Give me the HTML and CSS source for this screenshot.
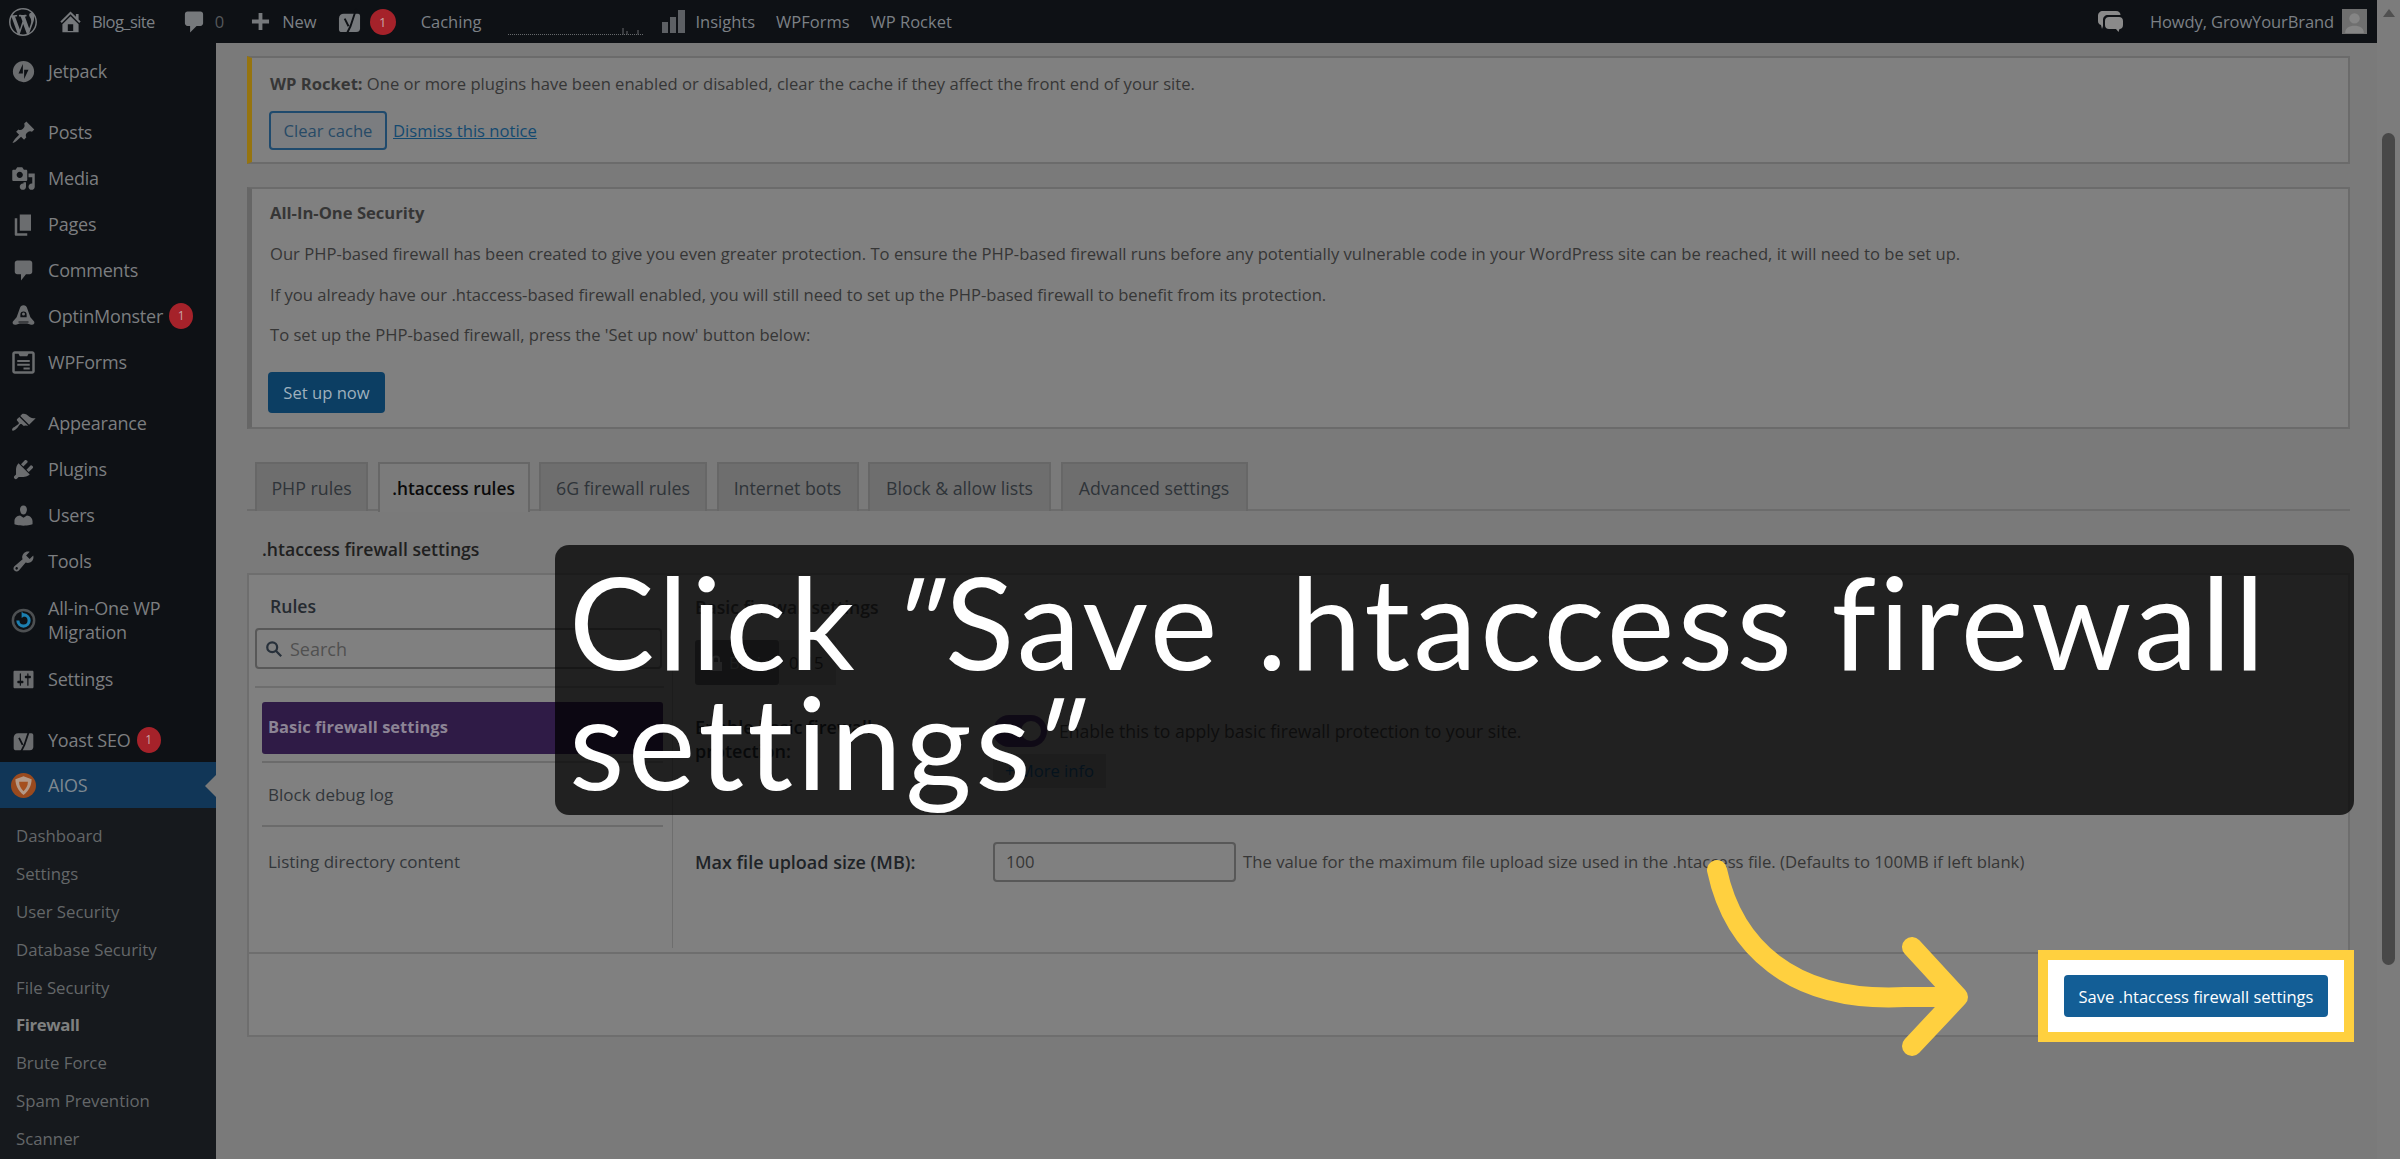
FILE: index.html
```html
<!DOCTYPE html>
<html>
<head>
    <title>Firewall ‹ Blog_site — WordPress</title>
    <link rel="stylesheet" href="styles.css">
</head>
<body>
    <div class="page">
        <div class="topbar">
            <div class="bar-left">
                <svg class="bar-icon logo" viewBox="0 0 20 20"><path d="M20 10c0-5.51-4.49-10-10-10C4.48 0 0 4.49 0 10c0 5.52 4.48 10 10 10 5.51 0 10-4.48 10-10zM7.78 15.37L4.37 6.22c.55-.02 1.17-.08 1.17-.08.5-.06.44-1.13-.06-1.11 0 0-1.45.11-2.37.11-.18 0-.37 0-.58-.01C4.12 2.69 6.87 1.11 10 1.11c2.33 0 4.45.87 6.05 2.34-.68-.11-1.65.39-1.65 1.58 0 .74.45 1.36.9 2.1.35.61.55 1.36.55 2.46 0 1.49-1.4 5-1.4 5l-3.03-8.37c.54-.02.82-.17.82-.17.5-.05.44-1.25-.06-1.22 0 0-1.44.12-2.38.12-.87 0-2.33-.12-2.33-.12-.5-.03-.56 1.2-.06 1.22l.92.08 1.26 3.41zM17.41 10c.24-.64.74-1.87.43-4.25.7 1.29 1.05 2.71 1.05 4.25 0 3.29-1.73 6.24-4.4 7.78.97-2.59 1.94-5.2 2.92-7.78zM6.1 18.09C3.12 16.65 1.11 13.53 1.11 10c0-1.3.23-2.48.72-3.59C3.25 10.3 4.67 14.2 6.1 18.09zm4.03-6.63l2.58 6.98c-.86.29-1.76.45-2.71.45-.79 0-1.57-.11-2.29-.33.81-2.38 1.62-4.74 2.42-7.1z"/></svg>
                <svg class="bar-icon home" viewBox="0 0 20 20"><path d="M16 8.5l1.53 1.53-1.06 1.06L10 4.62l-6.47 6.47-1.06-1.06L10 2.5l4 4v-2h2v4zm-6-2.46l6 5.99V18H4v-5.97zM12 17v-5H8v5h4z"/></svg>
                <span class="bar-text site-name">Blog_site</span>
                <svg class="bar-icon bubble" viewBox="0 0 20 20"><path d="M5 2h10c1.1 0 2 .9 2 2v7c0 1.1-.9 2-2 2h-3l-5 5v-5H5c-1.1 0-2-.9-2-2V4c0-1.1.9-2 2-2z"/></svg>
                <span class="bar-text count">0</span>
                <svg class="bar-icon plus" viewBox="0 0 20 20"><path d="M8 1h4v7h7v4h-7v7H8v-7H1V8h7z"/></svg>
                <span class="bar-text new">New</span>
                <svg class="bar-icon yoast" viewBox="0 0 24 28"><path d="M6 6h15c1 0 2 1 2 2v13c0 2-1 4-4 4H4c-2 0-3-1-3-3V11c0-3 2-5 5-5z"/><path class="yoast-y" d="M7 11l4 8M19 1l-6 18-4 8"/></svg>
                <span class="badge bar-badge">1</span>
                <span class="bar-text caching">Caching</span>
                <svg class="spark" viewBox="0 0 135 14"><path d="M0 12.5h135" stroke-dasharray="1 1"/><path d="M115 12.5V6M119 12.5V9M130 12.5V8"/></svg>
                <svg class="bar-icon bars" viewBox="0 0 23 24"><rect x="0" y="12" width="6" height="11"/><rect x="8" y="7" width="6" height="16"/><rect x="16" y="0" width="7" height="23"/></svg>
                <span class="bar-text insights">Insights</span>
                <span class="bar-text wpforms">WPForms</span>
                <span class="bar-text rocket">WP Rocket</span>
            </div>
            <div class="bar-right">
                <svg class="bar-icon chat" viewBox="0 0 25 22"><path d="M5 0h13c3 0 4.5 2 4.5 4H10C7 4 5 6 5 9v6l-1 3-1-4C1 13.5 0 12 0 10V5c0-3 2-5 5-5z"/><path d="M11 6h10c2.5 0 4 1.5 4 4v4c0 2.5-1.5 4-3.5 4l-1 3-2.500-3h-7c-2.500 0-4-1.500-4-4v-4c0-2.500 1.500-4 4-4z"/></svg>
                <span class="bar-text howdy">Howdy, GrowYourBrand</span>
                <div class="avatar"><svg viewBox="0 0 24 24"><circle cx="12" cy="9" r="5"/><path d="M3 23c0-5 4-7 9-7s9 2 9 7z"/></svg></div>
            </div>
        </div>

        <div class="layout">
            <div class="sidebar">
                <div class="menu-group">
                    <div class="menu-item">
                        <svg class="menu-icon" viewBox="0 0 20 20"><path fill-rule="evenodd" d="M10 1.5a8.5 8.5 0 1 1 0 17 8.5 8.5 0 0 1 0-17zM9.500 4L6 11.500h3.500zm1 12l3.500-7.500h-3.500z"/></svg>
                        <span>Jetpack</span>
                    </div>
                </div>
                <div class="menu-group">
                    <div class="menu-item">
                        <svg class="menu-icon" viewBox="0 0 20 20"><path d="M10.44 3.02l1.82-1.82 6.36 6.35-1.83 1.82c-1.05-.68-2.48-.57-3.41.36l-.75.75c-.92.93-1.04 2.35-.35 3.41l-1.83 1.82-2.41-2.41-2.8 2.79c-.42.42-3.38 2.71-3.8 2.29s1.86-3.39 2.28-3.81l2.79-2.79L4.1 9.36l1.83-1.82c1.05.69 2.48.57 3.4-.36l.75-.75c.93-.92 1.05-2.35.36-3.41z"/></svg>
                        <span>Posts</span>
                    </div>
                    <div class="menu-item">
                        <svg class="menu-icon" viewBox="0 0 20 20"><path d="M13 11V4c0-.55-.45-1-1-1h-1.67L9 1H5L3.67 3H2c-.55 0-1 .45-1 1v7c0 .55.45 1 1 1h10c.55 0 1-.45 1-1zM7 4.5c1.38 0 2.5 1.12 2.5 2.5S8.38 9.5 7 9.5 4.5 8.38 4.5 7 5.62 4.5 7 4.5zM14 6h5v10.5c0 1.38-1.12 2.5-2.5 2.5S14 17.88 14 16.5s1.12-2.5 2.5-2.5c.17 0 .34.02.5.05V9h-3V6zm-4 8.05V13h2v3.5c0 1.38-1.12 2.5-2.5 2.5S7 17.88 7 16.5 8.12 14 9.5 14c.17 0 .34.02.5.05z"/></svg>
                        <span>Media</span>
                    </div>
                    <div class="menu-item">
                        <svg class="menu-icon" viewBox="0 0 20 20"><path d="M7 2h9v13H7zM5 5v12h8v2H4c-.6 0-1-.4-1-1V5z"/></svg>
                        <span>Pages</span>
                    </div>
                    <div class="menu-item">
                        <svg class="menu-icon" viewBox="0 0 20 20"><path d="M5 2h10c1.1 0 2 .9 2 2v7c0 1.1-.9 2-2 2h-3l-4 5v-5H5c-1.1 0-2-.9-2-2V4c0-1.1.9-2 2-2z"/></svg>
                        <span>Comments</span>
                    </div>
                    <div class="menu-item">
                        <svg class="menu-icon" viewBox="0 0 20 20"><path d="M10 1c1.5 0 2.5 1 3 2.5l2.5 7 3 3.5c.8 1.500-.5 3-2.500 2.500l-3-1h-6l-3 1c-2 .5-3.300-1-2.500-2.500l3-3.500 2.500-7C7.500 2 8.500 1 10 1z"/><path class="icon-cut" d="M7.500 8.500a2.500 2.500 0 0 1 5 0v2h-5zM6 14h8v.8H6z"/><circle cx="10" cy="8" r="1.200"/></svg>
                        <span>OptinMonster</span>
                        <span class="badge">1</span>
                    </div>
                    <div class="menu-item">
                        <svg class="menu-icon" viewBox="0 0 20 20"><path fill-rule="evenodd" d="M3 1h14c1 0 2 1 2 2v14c0 1-1 2-2 2H3c-1 0-2-1-2-2V3c0-1 1-2 2-2zm0 2v14h14V3h-3l-1 2H7L6 3zm2 5h10v1.5H5zm0 3h10v1.5H5zm5 3h5v1.5h-5z"/></svg>
                        <span>WPForms</span>
                    </div>
                </div>
                <div class="menu-group">
                    <div class="menu-item">
                        <svg class="menu-icon" viewBox="0 0 20 20"><path d="M14.48 11.06L7.41 3.99l1.5-1.5c.5-.56 2.3-.47 3.51.32 1.21.8 1.43 1.28 2.91 2.1 1.18.64 2.45 1.26 4.45.85zm-.71.71L6.7 4.7 4.93 6.47c-.39.39-.39 1.02 0 1.41l1.06 1.06c.39.39.39 1.03 0 1.42-.6.6-1.43 1.11-2.21 1.69-.35.26-.7.53-1.01.84C1.43 13.23.4 14.89 1.06 15.55c.65.65 2.32-.38 3.66-1.71.31-.31.58-.66.84-1.01.58-.78 1.09-1.61 1.69-2.21.39-.39 1.03-.39 1.42 0l1.06 1.06c.39.39 1.02.39 1.41 0z"/></svg>
                        <span>Appearance</span>
                    </div>
                    <div class="menu-item">
                        <svg class="menu-icon" viewBox="0 0 20 20"><path d="M13.11 4.36L9.87 7.6 8 5.73l3.24-3.24c.35-.34 1.05-.2 1.56.32.52.51.66 1.21.31 1.55zm-8 1.77l.91-1.12 9.01 9.01-1.19.84c-.71.71-2.63 1.16-3.82 1.16H6.14L4.9 17.26c-.59.59-1.54.59-2.12 0-.59-.58-.59-1.53 0-2.12l1.24-1.24v-3.88c0-1.13.4-3.19 1.09-3.89zm7.26 3.97l3.24-3.24c.34-.35 1.04-.21 1.55.31.52.51.66 1.21.31 1.55l-3.24 3.25z"/></svg>
                        <span>Plugins</span>
                    </div>
                    <div class="menu-item">
                        <svg class="menu-icon" viewBox="0 0 20 20"><path d="M10 9.25c-2.27 0-2.73-3.44-2.73-3.44C7 4.02 7.82 2 9.97 2c2.16 0 2.98 2.02 2.71 3.81 0 0-.41 3.44-2.68 3.44zm0 2.57L12.72 10c2.39 0 4.52 2.33 4.52 4.53v2.49s-3.65 1.13-7.24 1.13c-3.65 0-7.24-1.13-7.24-1.13v-2.49c0-2.25 1.94-4.48 4.47-4.48z"/></svg>
                        <span>Users</span>
                    </div>
                    <div class="menu-item">
                        <svg class="menu-icon" viewBox="0 0 20 20"><path d="M16.68 9.77c-1.34 1.34-3.3 1.67-4.95.99l-5.41 6.52c-.99.99-2.59.99-3.58 0s-.99-2.59 0-3.57l6.52-5.42c-.68-1.65-.35-3.61.99-4.95 1.28-1.28 3.12-1.62 4.72-1.06l-2.89 2.89 2.82 2.82 2.86-2.87c.53 1.58.18 3.39-1.08 4.65zM3.81 16.21c.4.39 1.04.39 1.43 0 .4-.4.4-1.04 0-1.43-.39-.4-1.03-.4-1.43 0-.39.39-.39 1.03 0 1.43z"/></svg>
                        <span>Tools</span>
                    </div>
                    <div class="menu-item two-line">
                        <svg class="menu-icon" viewBox="0 0 20 20"><circle class="ring" cx="10" cy="10" r="8.5"/><path class="ring-blue" d="M10 5.5a4.5 4.5 0 1 1-4.500 4.500"/><path class="ring-head" d="M8.500 3l3.500 2.500L8.500 8z"/></svg>
                        <span>All-in-One WP<br>Migration</span>
                    </div>
                    <div class="menu-item">
                        <svg class="menu-icon" viewBox="0 0 20 20"><path d="M18 16V4c0-.55-.45-1-1-1H3c-.55 0-1 .45-1 1v12c0 .55.45 1 1 1h14c.55 0 1-.45 1-1zM8 11h1c.55 0 1 .45 1 1s-.45 1-1 1H8v1.5c0 .28-.22.5-.5.5s-.5-.22-.5-.5V13H6c-.55 0-1-.45-1-1s.45-1 1-1h1V5.5c0-.28.22-.5.5-.5s.5.22.5.5V11zm5-2h-1c-.55 0-1-.45-1-1s.45-1 1-1h1V5.5c0-.28.22-.5.5-.5s.5.22.5.5V7h1c.55 0 1 .45 1 1s-.45 1-1 1h-1v5.5c0 .28-.22.5-.5.5s-.5-.22-.5-.5V9z"/></svg>
                        <span>Settings</span>
                    </div>
                </div>
                <div class="menu-group last">
                    <div class="menu-item">
                        <svg class="menu-icon" viewBox="0 0 24 28"><path d="M6 6h15c1 0 2 1 2 2v13c0 2-1 4-4 4H4c-2 0-3-1-3-3V11c0-3 2-5 5-5z"/><path class="yoast-y" d="M7 11l4 8M19 1l-6 18-4 8"/></svg>
                        <span>Yoast SEO</span>
                        <span class="badge">1</span>
                    </div>
                    <div class="menu-item current">
                        <svg class="menu-icon" viewBox="0 0 20 20"><circle class="aios-disc" cx="10" cy="10" r="10"/><path class="aios-shield" d="M3.5 5L10 2.5 16.5 5c0 5-2.5 9.5-6.5 12.5C6 14.500 3.500 10 3.500 5z"/><path class="aios-heart" d="M6.500 7h7c0 3-1.200 5.200-3.500 7.500C7.700 12.200 6.500 10 6.500 7z"/></svg>
                        <span>AIOS</span>
                    </div>
                    <div class="submenu">
                        <a>Dashboard</a>
                        <a>Settings</a>
                        <a>User Security</a>
                        <a>Database Security</a>
                        <a>File Security</a>
                        <a class="active">Firewall</a>
                        <a>Brute Force</a>
                        <a>Spam Prevention</a>
                        <a>Scanner</a>
                    </div>
                </div>
            </div>

            <div class="content">
                <div class="notice notice-rocket">
                    <p><b>WP Rocket:</b> One or more plugins have been enabled or disabled, clear the cache if they affect the front end of your site.</p>
                    <div class="notice-actions">
                        <span class="btn-outline">Clear cache</span>
                        <a class="dismiss">Dismiss this notice</a>
                    </div>
                </div>

                <div class="notice notice-security">
                    <p class="notice-title"><b>All-In-One Security</b></p>
                    <p>Our PHP-based firewall has been created to give you even greater protection. To ensure the PHP-based firewall runs before any potentially vulnerable code in your WordPress site can be reached, it will need to be set up.</p>
                    <p>If you already have our .htaccess-based firewall enabled, you will still need to set up the PHP-based firewall to benefit from its protection.</p>
                    <p>To set up the PHP-based firewall, press the 'Set up now' button below:</p>
                    <span class="btn-primary setup">Set up now</span>
                </div>

                <div class="tabs">
                    <span class="tab t1">PHP rules</span>
                    <span class="tab t2 active">.htaccess rules</span>
                    <span class="tab t3">6G firewall rules</span>
                    <span class="tab t4">Internet bots</span>
                    <span class="tab t5">Block &amp; allow lists</span>
                    <span class="tab t6">Advanced settings</span>
                </div>

                <h2 class="section-title">.htaccess firewall settings</h2>

                <div class="panel">
                    <div class="panel-body">
                        <div class="rules">
                            <div class="rules-title">Rules</div>
                            <div class="rules-search">
                                <svg viewBox="0 0 20 20"><circle cx="8" cy="8" r="5.5"/><path d="M12 12l6 6"/></svg>
                                <span>Search</span>
                            </div>
                            <div class="rules-list">
                                <div class="rule selected">Basic firewall settings</div>
                                <div class="rule">Block debug log</div>
                                <div class="rule">Listing directory content</div>
                            </div>
                        </div>
                        <div class="rule-detail">
                            <h3>Basic firewall settings</h3>
                            <div class="level">
                                <span class="level-tag">
                                    <svg viewBox="0 0 14 18"><path d="M1 8h12v9H1z"/><path class="shackle" d="M4 8V5c0-3.5 6-3.5 6 0v3"/></svg>
                                    Basic
                                </span>
                                <span class="level-score">0/15</span>
                            </div>
                            <div class="field enable">
                                <label>Enable basic firewall<br>protection:</label>
                                <div>
                                    <div class="toggle-row">
                                        <span class="toggle"><span class="knob"></span></span>
                                        <span>Enable this to apply basic firewall protection to your site.</span>
                                    </div>
                                    <span class="more-info">+ More info</span>
                                </div>
                            </div>
                            <div class="field upload">
                                <label>Max file upload size (MB):</label>
                                <span class="text-input">100</span>
                                <span class="field-note">The value for the maximum file upload size used in the .htaccess file. (Defaults to 100MB if left blank)</span>
                            </div>
                        </div>
                    </div>
                    <div class="panel-footer"></div>
                </div>
            </div>
        </div>
    </div>

    <div class="scrollbar">
        <span class="scroll-up"></span>
        <span class="scroll-thumb"></span>
    </div>

    <div class="caption">Click <i>"</i>Save .htaccess firewall settings<i>"</i></div>
    <svg class="arrow" viewBox="0 0 2400 1159">
        <path d="M1717 870C1733 945 1790 1003 1905 997L1958 997M1912 947L1958 997L1912 1046"/>
    </svg>
    <div class="highlight"><span class="btn-primary save">Save .htaccess firewall settings</span></div>
</body>
</html>
```

FILE: styles.css
```css
* {
    box-sizing: border-box;
}

html, body {
    margin: 0;
    padding: 0;
    height: 1159px;
    overflow: hidden;
}

body {
    display: flex;
    background-color: #7a7a7a;
    color: #363636;
    font-family: 'Open Sans', 'Noto Sans', sans-serif;
    font-size: 16.6px;
}

.page {
    width: 2377px;
    height: 1159px;
    display: flex;
    flex-direction: column;
}

/* top admin bar */
.topbar {
    height: 43px;
    flex: none;
    background-color: #0e1115;
    display: flex;
    justify-content: space-between;
    align-items: center;
    color: #7c8085;
    font-size: 16.5px;
}

.bar-left, .bar-right {
    display: flex;
    align-items: center;
    height: 43px;
}

.bar-icon {
    fill: #76797c;
    display: block;
    flex: none;
}

.logo { width: 28px; height: 28px; margin-left: 9px; }
.home { width: 27px; height: 27px; margin-left: 20px; }
.site-name { margin-left: 8px; letter-spacing: -0.6px; }
.bubble { width: 26px; height: 26px; margin-left: 26px; }
.count { margin-left: 8px; color: #55585b; }
.plus { width: 19px; height: 19px; margin-left: 27px; }
.new { margin-left: 12px; }
.yoast { width: 23px; height: 27px; margin-left: 21px; }
.yoast-y { fill: none; stroke: #0e1115; stroke-width: 2; }
.bar-badge { margin-left: 9px; width: 27px; height: 27px; }
.caching { margin-left: 25px; }
.spark { width: 135px; height: 14px; margin-left: 27px; margin-top: 14px; fill: none; stroke: #66696c; stroke-width: 1; flex: none; }
.bars { width: 23px; height: 24px; margin-left: 19px; fill: #5d6064; }
.insights { margin-left: 10px; }
.wpforms { margin-left: 21px; }
.rocket { margin-left: 21px; }

.chat { width: 25px; height: 22px; fill: #8a8a8a; }
.howdy { margin-left: 27px; letter-spacing: -0.1px; }

.avatar {
    width: 25px;
    height: 25px;
    margin-left: 8px;
    margin-right: 10px;
    background-color: #6f6f6f;
}

.avatar svg {
    display: block;
    fill: #858585;
}

.badge {
    display: flex;
    align-items: center;
    justify-content: center;
    width: 26px;
    height: 26px;
    flex: none;
    border-radius: 50%;
    background-color: #a5222a;
    color: #c9a5a7;
    font-size: 13px;
}

/* left menu */
.layout {
    flex: 1;
    display: flex;
    min-height: 0;
}

.sidebar {
    width: 216px;
    flex: none;
    background-color: #0e1115;
    padding-top: 5px;
    color: #7c7e80;
    overflow: hidden;
}

.menu-group {
    margin-bottom: 15px;
}

.menu-group.last {
    margin-bottom: 0;
}

.menu-item {
    height: 46px;
    display: flex;
    align-items: center;
    padding-left: 11px;
    font-size: 18px;
    letter-spacing: -0.2px;
    line-height: 24px;
}

.menu-item span {
    white-space: nowrap;
}

.menu-item.two-line {
    height: 72px;
}

.menu-icon {
    width: 25px;
    height: 25px;
    flex: none;
    margin-right: 12px;
    fill: #6b6d6f;
}

.menu-item .badge {
    margin-left: 6px;
    width: 24px;
    height: 26px;
    letter-spacing: 0;
    font-size: 12px;
}

.icon-cut { fill: #0e1115; }
.ring { fill: none; stroke: #4d5052; stroke-width: 2; }
.ring-blue { fill: none; stroke: #1c7fb0; stroke-width: 2.5; }
.ring-head { fill: #1c7fb0; }

.menu-item.current {
    background-color: #113657;
    position: relative;
    margin-top: -1px;
    color: #7e8890;
}

.menu-item.current:after {
    content: "";
    position: absolute;
    right: 0;
    top: 13px;
    border: 11px solid transparent;
    border-right-color: #7a7a7a;
    border-left-width: 0;
}

.aios-disc { fill: #9a4a1e; }
.aios-shield { fill: #b59a88; }
.aios-heart { fill: #a5501f; }

.submenu {
    background-color: #16191d;
    padding: 9px 0;
    color: #646769;
    font-size: 16.8px;
}

.submenu a {
    display: block;
    height: 37.9px;
    line-height: 38px;
    padding-left: 16px;
}

.submenu a.active {
    color: #7f8080;
    font-weight: bold;
    letter-spacing: -0.4px;
}

/* main area */
.content {
    flex: 1;
    padding: 13px 27px 0 31px;
    min-width: 0;
}

p {
    margin: 0;
}

.notice {
    background-color: #808080;
    border: 2px solid #6b6b6b;
    padding-left: 18px;
    line-height: 24px;
}

.notice-rocket {
    height: 108px;
    margin-bottom: 23px;
    border-left: 5px solid #96740f;
    padding-top: 14px;
}

.notice-actions {
    display: flex;
    align-items: center;
    margin-top: 15px;
    margin-left: -1px;
}

.btn-outline {
    width: 118px;
    height: 39px;
    display: flex;
    align-items: center;
    justify-content: center;
    border: 2px solid #1f4a6d;
    border-radius: 4px;
    color: #274a66;
    background-color: #7b7d80;
}

.dismiss {
    margin-left: 6px;
    color: #144a70;
    text-decoration: underline;
}

.notice-security {
    height: 242px;
    margin-bottom: 33px;
    border-left: 5px solid #666;
    padding-top: 12px;
}

.notice-security p {
    margin-bottom: 16px;
}

.notice-security .notice-title {
    margin-bottom: 17px;
}

.notice-security p:nth-of-type(2) {
    margin-bottom: 17px;
}

.btn-primary {
    display: flex;
    align-items: center;
    justify-content: center;
    background-color: #0c3e63;
    color: #9fb0bd;
    border-radius: 4px;
}

.setup {
    width: 117px;
    height: 41px;
    margin-top: 25px;
    margin-left: -2px;
}

.tabs {
    height: 49px;
    display: flex;
    gap: 9.5px;
    padding-left: 8px;
    border-bottom: 2px solid #6c6c6c;
}

.tab {
    height: 49px;
    display: flex;
    align-items: center;
    justify-content: center;
    background-color: #6e6e6e;
    border: 2px solid #676767;
    border-bottom: none;
    color: #2f3439;
    font-size: 17.8px;
}

.tab.active {
    background-color: #7b7b7b;
    height: 50px;
    color: #0a0a0a;
    font-weight: 600;
    font-size: 17.3px;
}

.t1 { width: 113px; }
.t2 { width: 152px; }
.t3 { width: 168px; }
.t4 { width: 142px; }
.t5 { width: 183px; }
.t6 { width: 187px; }

.section-title {
    margin: 0;
    padding: 25px 0 0 15px;
    height: 62px;
    line-height: 26px;
    font-size: 17.6px;
    font-weight: 600;
    color: #202020;
}

.panel {
    height: 464px;
    background-color: #808080;
    border: 2px solid #6e6e6e;
    display: flex;
    flex-direction: column;
}

.panel-body {
    height: 379px;
    flex: none;
    display: flex;
    border-bottom: 2px solid #6e6e6e;
}

.rules {
    width: 424px;
    height: 373px;
    flex: none;
    border-right: 1px solid #6e6e6e;
    padding: 0 7px 0 6px;
}

.rules-title {
    height: 53px;
    padding: 19px 0 0 15px;
    line-height: 24px;
    font-size: 17.6px;
    font-weight: 600;
    color: #252a30;
}

.rules-search {
    height: 41px;
    width: 407px;
    border: 2px solid #585858;
    border-radius: 4px;
    display: flex;
    align-items: center;
    padding-left: 8px;
    color: #505050;
    font-size: 18px;
}

.rules-search svg {
    width: 18px;
    height: 18px;
    margin-right: 7px;
    fill: none;
    stroke: #27303a;
    stroke-width: 2.5;
}

.rules-list {
    border-top: 2px solid #6e6e6e;
    margin-top: 17px;
    padding: 14px 0 0 7px;
    width: 409px;
}

.rule {
    height: 66px;
    border-bottom: 2px solid #6b6b6b;
    padding: 20px 0 0 6px;
    line-height: 24px;
    color: #32363a;
    margin-right: 1px;
    font-size: 17px;
}

.rule:last-child {
    border-bottom: none;
    padding-top: 23px;
}

.rule.selected {
    height: 52px;
    padding: 13px 0 0 6px;
    background-color: #2f1b46;
    color: #8c8495;
    font-weight: 700;
    font-size: 16.5px;
    border: none;
    border-radius: 3px;
    margin-bottom: 7px;
}

.rule.selected + .rule {
    border-top: 2px solid #6b6b6b;
    height: 66px;
}

.rule-detail {
    flex: 1;
    padding-left: 22px;
}

.rule-detail h3 {
    margin: 0;
    padding-top: 20px;
    height: 65px;
    line-height: 24px;
    font-size: 17.6px;
    font-weight: 600;
}

.level {
    display: flex;
    height: 45px;
}

.level-tag {
    width: 84px;
    background-color: #4a4c4e;
    color: #6d6f72;
    display: flex;
    align-items: center;
    gap: 6px;
    padding-left: 14px;
    border-radius: 3px;
}

.level-tag svg {
    width: 14px;
    height: 18px;
    fill: #8a8c8e;
}

.shackle {
    fill: none;
    stroke: #8a8c8e;
    stroke-width: 2;
}

.level-score {
    width: 57px;
    display: flex;
    align-items: center;
    padding-left: 10px;
    background-color: #707070;
    color: #2a2a2a;
}

.field {
    display: flex;
    line-height: 24px;
}

.field label {
    width: 298px;
    font-weight: 600;
    font-size: 18px;
    color: #1e2327;
    flex: none;
}

.enable {
    margin-top: 29px;
}

.enable label {
    padding-top: 1px;
}

.toggle-row {
    display: flex;
    align-items: center;
    gap: 12px;
    margin-top: 1px;
    font-size: 17.6px;
    white-space: nowrap;
}

.toggle {
    width: 54px;
    height: 32px;
    border-radius: 16px;
    background-color: #3d2a55;
    padding: 6px 6px 6px 28px;
}

.knob {
    display: block;
    width: 20px;
    height: 20px;
    border-radius: 50%;
    background-color: #808080;
}

.more-info {
    display: inline-block;
    margin-top: 7px;
    padding: 5px 12px;
    background-color: #707070;
    color: #144a70;
}

.upload {
    margin-top: 54px;
    align-items: center;
}

.text-input {
    width: 243px;
    height: 40px;
    flex: none;
    border: 2px solid #585858;
    border-radius: 4px;
    display: flex;
    align-items: center;
    padding-left: 11px;
}

.field-note {
    margin-left: 7px;
    font-size: 16.7px;
    white-space: nowrap;
}

.panel-footer {
    flex: 1;
}

/* right scrollbar */
.scrollbar {
    width: 23px;
    flex: none;
    background-color: #7c7c7c;
    position: relative;
}

.scroll-up {
    position: absolute;
    top: 9px;
    left: 6px;
    border: 6px solid transparent;
    border-top: none;
    border-bottom: 8px solid #505050;
}

.scroll-thumb {
    position: absolute;
    top: 133px;
    left: 5px;
    width: 13px;
    height: 832px;
    border-radius: 7px;
    background-color: #484848;
}

/* tutorial layer on top of the dimmed page */
.caption {
    position: absolute;
    left: 555px;
    top: 545px;
    width: 1799px;
    height: 270px;
    padding: 16px 15px 0 14px;
    border-radius: 14px;
    background-color: rgba(0, 0, 0, 0.74);
    color: #fff;
    font-family: 'Lato', sans-serif;
    font-size: 128px;
    line-height: 120px;
    letter-spacing: 3.3px;
}

.caption i {
    display: inline-block;
    font-style: normal;
    transform: skewX(-16deg);
}

.arrow {
    position: absolute;
    left: 0;
    top: 0;
    width: 2400px;
    height: 1159px;
    fill: none;
    stroke: #ffd03f;
    stroke-width: 20;
    stroke-linecap: round;
    stroke-linejoin: round;
    pointer-events: none;
}

.highlight {
    position: absolute;
    left: 2038px;
    top: 950px;
    width: 316px;
    height: 92px;
    border: 10px solid #ffd03f;
    background-color: #fff;
    padding: 15px 16px;
}

.save {
    height: 42px;
    background-color: #135e96;
    color: #fff;
    font-size: 16.5px;
}
```
